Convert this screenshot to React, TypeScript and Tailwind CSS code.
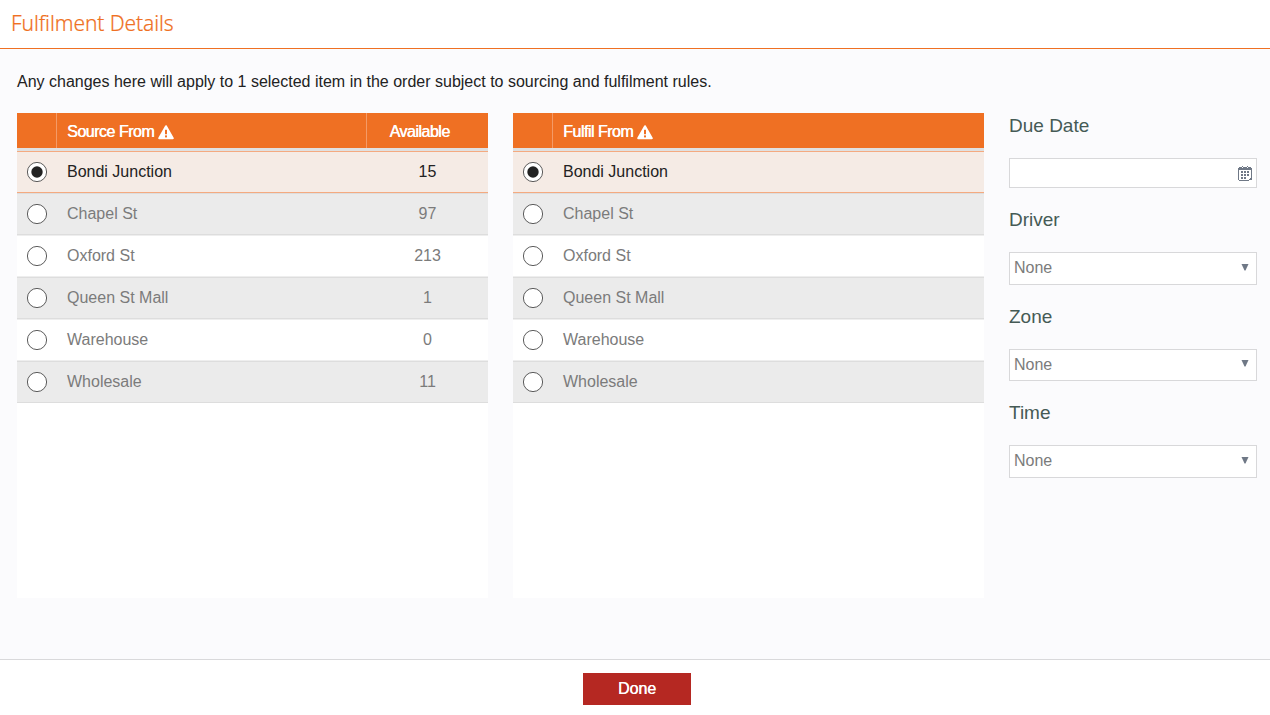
import clsx from "clsx";

type Store = {
    name: string;
    available: number;
};

const stores: Store[] = [
    { name: "Bondi Junction", available: 15 },
    { name: "Chapel St", available: 97 },
    { name: "Oxford St", available: 213 },
    { name: "Queen St Mall", available: 1 },
    { name: "Warehouse", available: 0 },
    { name: "Wholesale", available: 11 },
];

const WarningIcon = () => (
    <svg width="16" height="15" viewBox="0 0 16 15" className="mt-px ml-1">
        <path
            d="M8 1.2 L14.8 13.2 H1.2 Z"
            fill="#fff"
            stroke="#fff"
            strokeWidth="2"
            strokeLinejoin="round"
        />
        <rect x="7" y="4.8" width="2" height="4.4" fill="#ef7023" />
        <rect x="7" y="10.4" width="2" height="2" fill="#ef7023" />
    </svg>
);

const CalendarIcon = () => (
    <svg
        width="14"
        height="15"
        viewBox="0 0 14 15"
        fill="#6f7886"
        shapeRendering="crispEdges"
    >
        <path d="M1 1h3v1h1v-1h4v1h1v-1h3v1h1v2h-14v-2h1z" />
        <path d="M4 0h1v1h-1zM9 0h1v1h-1z" />
        <path d="M0 4h1v10h-1zM13 4h1v8h-1zM1 14h10v1h-10zM11 13h2v1h-2zM12 12h2v2h-2z" />
        <path d="M3 5h2v2h-2zM6 5h2v2h-2zM9 5h2v2h-2zM3 8h2v2h-2zM6 8h2v2h-2zM9 8h2v2h-2zM3 11h2v2h-2zM6 11h2v2h-2z" />
    </svg>
);

const Radio = ({ checked }: { checked: boolean }) => (
    <svg width="20" height="20" viewBox="0 0 20 20">
        <circle
            cx="10"
            cy="10"
            r="9.6"
            fill="#fff"
            stroke="#4a4a4a"
            strokeWidth="0.9"
        />
        {checked && <circle cx="10" cy="10" r="5.7" fill="#222" />}
    </svg>
);

const StoreTable = ({
    title,
    showAvailable = false,
}: {
    title: string;
    showAvailable?: boolean;
}) => (
    <section className="h-[485px] w-[471px] shrink-0 bg-white">
        <div className="flex h-[35px] bg-[#ef7023] leading-[37px] tracking-[-0.5px] text-white [text-shadow:0.5px_0_0_#fff]">
            <div className="w-10 border-r border-[#f49a66]" />
            <div className="flex h-[37px] flex-1 items-center pl-[10px]">
                <span>{title}</span>
                <WarningIcon />
            </div>
            {showAvailable && (
                <div className="w-[122px] border-l border-[#f49a66] pr-4 text-center">
                    Available
                </div>
            )}
        </div>
        <div className="h-[3px] bg-[#e0e0e0]" />
        {stores.map((store, index) => (
            <div
                key={store.name}
                className={clsx(
                    "flex h-[42px] items-center border-y",
                    index === 0 &&
                        "border-[#f4aa80] bg-[#f5ebe5] text-[#222]",
                    index > 0 && "text-[#7b7b7b]",
                    index > 0 &&
                        (index % 2 === 1
                            ? "border-[#dddddd] bg-[#ebebeb]"
                            : "border-[#eeeeee] bg-white")
                )}
            >
                <div className="w-10 pl-[10px]">
                    <Radio checked={index === 0} />
                </div>
                <div className="flex-1 pl-[10px]">{store.name}</div>
                {showAvailable && (
                    <div className="w-[121px] text-center">
                        {store.available}
                    </div>
                )}
            </div>
        ))}
    </section>
);

const SelectField = ({
    label,
    boxClass,
    arrowClass,
}: {
    label: string;
    boxClass: string;
    arrowClass: string;
}) => (
    <div className="mt-5">
        <h2 className="text-[19px] leading-6 text-[#455a55]">{label}</h2>
        <div
            className={clsx(
                "mt-5 flex justify-between border border-[#d8d8da] bg-white pr-[7px] pl-1 text-[#7b7b7b]",
                boxClass
            )}
        >
            <span className="leading-[30px]">None</span>
            <svg
                width="8"
                height="7"
                viewBox="0 0 8 7"
                className={arrowClass}
            >
                <path d="M0.5 0h7l-3 6.5h-1z" fill="#6f7886" />
            </svg>
        </div>
    </div>
);

export default function App() {
    return (
        <div className="flex h-[715px] w-[1270px] flex-col bg-[#fbfbfd] font-['Liberation_Sans',Arial,sans-serif] text-base">
            <header className="h-[49px] border-b border-[#ef7023] bg-white pl-[11px]">
                <h1 className="font-['Noto_Sans',sans-serif] text-[21px] leading-[46px] font-light tracking-[-0.1px] text-[#ef7023] [-webkit-text-stroke:0.2px_#ef7023]">
                    Fulfilment Details
                </h1>
            </header>
            <main className="flex-1 pt-[21px] pr-[13px] pl-[17px]">
                <p className="leading-6 text-[#222]">
                    Any changes here will apply to 1 selected item in the order
                    subject to sourcing and fulfilment rules.
                </p>
                <div className="mt-[19px] flex gap-[25px]">
                    <StoreTable title="Source From" showAvailable />
                    <StoreTable title="Fulfil From" />
                    <aside className="w-[248px]">
                        <h2 className="mt-px text-[19px] leading-6 text-[#455a55]">
                            Due Date
                        </h2>
                        <div className="mt-5 flex h-[30px] items-start justify-end border border-[#d8d8da] bg-white pt-[7px] pr-1">
                            <CalendarIcon />
                        </div>
                        <SelectField
                            label="Driver"
                            boxClass="h-[33px]"
                            arrowClass="mt-[11px]"
                        />
                        <SelectField
                            label="Zone"
                            boxClass="h-8"
                            arrowClass="mt-[10px]"
                        />
                        <SelectField
                            label="Time"
                            boxClass="h-[33px]"
                            arrowClass="mt-[11px]"
                        />
                    </aside>
                </div>
            </main>
            <footer className="h-14 border-t border-[#d9d9db] bg-white pt-[13px] pl-[583px]">
                <button className="h-8 w-[108px] bg-[#b52822] text-white [text-shadow:0.3px_0_0_#fff]">
                    Done
                </button>
            </footer>
        </div>
    );
}
